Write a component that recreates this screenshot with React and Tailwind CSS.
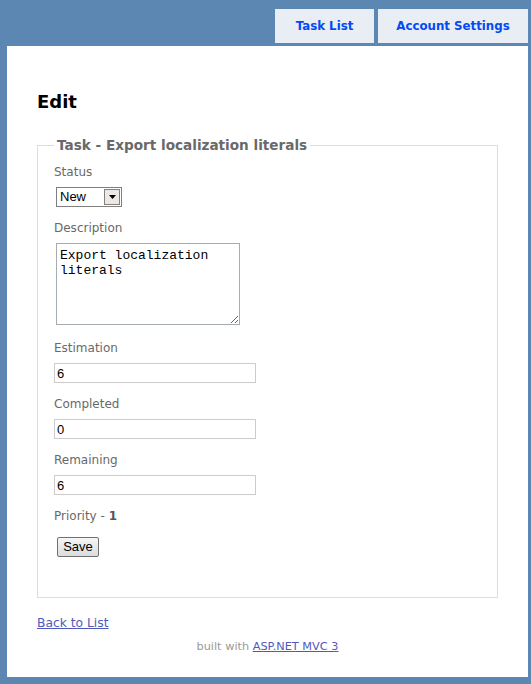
import React from "react";

const labelCls = "leading-[16px] text-[12px] text-[#696969]";

function Field({ label, value, mt = "mt-[13px]" }) {
  return (
    <>
      <div className={`${labelCls} ${mt}`}>{label}</div>
      <input
        readOnly
        value={value}
        className="mt-[7px] block h-[20px] w-[202px] border border-[#cccccc] bg-white px-[2px] text-[13px] leading-[18px] text-black outline-none [font-family:'Liberation_Sans',Arial,sans-serif]"
      />
    </>
  );
}

export default function App() {
  return (
    <div className="min-h-[684px] bg-[#5c87b2] pt-[9px] pb-[7px] [font-family:'DejaVu_Sans',Verdana,sans-serif]">
      <div className="flex h-[34px] justify-end gap-[4px] pr-[3px]">
        <a className="flex w-[99px] items-center justify-center bg-[#e8eef4] pt-[2px] text-[11.8px] font-bold text-[#034af3]">
          Task List
        </a>
        <a className="flex w-[150px] items-center justify-center bg-[#e8eef4] pt-[2px] text-[11.8px] font-bold text-[#034af3]">
          Account Settings
        </a>
      </div>
      <div className="mt-[3px] mr-[3px] ml-[7px] h-[631px] bg-white px-[30px] pt-[45px]">
        <h2 className="text-[18px] leading-[22px] font-bold text-black">Edit</h2>
        <fieldset className="mt-[23px] border border-[#dddddd] pr-[16px] pb-[40px] pl-[16px]">
          <legend className="px-[3px] text-[13.6px] leading-[18px] font-bold text-[#696969]">
            Task - Export localization literals
          </legend>
          <div className={`${labelCls} mt-[10px]`}>Status</div>
          <div className="mt-[7px] ml-[2px] flex h-[20px] w-[66px] items-center border border-[#7f7f7f] bg-white [font-family:'Liberation_Sans',Arial,sans-serif]">
            <span className="flex-1 pl-[3px] text-[13px] text-black">New</span>
            <span className="mr-[1px] flex h-[16px] w-[16px] items-center justify-center border border-[#808080] bg-[#ece9e4]">
              <svg width="7" height="4" viewBox="0 0 7 4">
                <path d="M0 0h7L3.5 4z" fill="#000" />
              </svg>
            </span>
          </div>
          <div className={`${labelCls} mt-[13px]`}>Description</div>
          <textarea
            readOnly
            value="Export localization literals"
            className="mt-[7px] ml-[2px] block h-[82px] w-[184px] resize border border-[#a5acb2] bg-white px-[3px] pt-[4px] pb-[3px] text-[13px] leading-[15px] text-black outline-none [font-family:'Liberation_Mono','Courier_New',monospace]"
          />
          <Field label="Estimation" value="6" mt="mt-[15px]" />
          <Field label="Completed" value="0" />
          <Field label="Remaining" value="6" />
          <div className={`${labelCls} mt-[13px]`}>
            Priority - <b className="text-[#555555]">1</b>
          </div>
          <button className="mt-[13px] ml-[3px] block h-[20px] w-[42px] rounded-[2px] border border-[#707070] bg-gradient-to-b from-[#f6f6f6] to-[#dcdcdc] text-[13px] leading-[18px] text-black [font-family:'Liberation_Sans',Arial,sans-serif]">
            Save
          </button>
        </fieldset>
        <div className="mt-[16px] leading-[16px]">
          <a className="text-[12.3px] text-[#505abc] underline">Back to List</a>
        </div>
        <div className="mt-[9px] text-center text-[11.3px] leading-[14px] text-[#999999]">
          built with <a className="text-[#505abc] underline">ASP.NET MVC 3</a>
        </div>
      </div>
    </div>
  );
}
